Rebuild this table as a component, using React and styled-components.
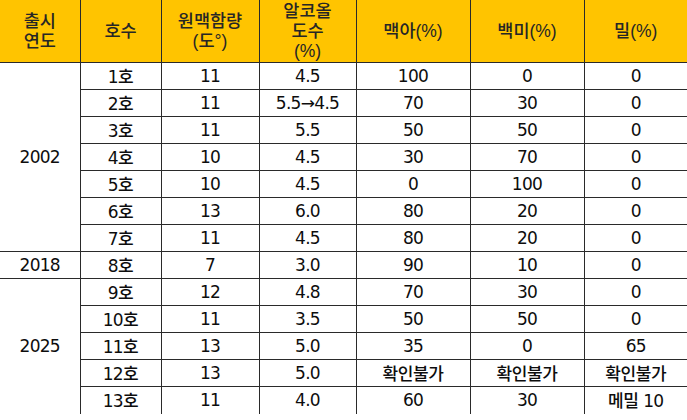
import React from 'react';
import styled, { createGlobalStyle } from 'styled-components';

const GlobalStyle = createGlobalStyle`
  html, body {
    margin: 0;
    padding: 0;
    background: #fff;
  }
  body {
    font-family: "DejaVu Sans", "Noto Sans CJK KR", sans-serif;
  }
`;

const Table = styled.table`
  width: 687px;
  border-collapse: collapse;
  table-layout: fixed;
  color: #0d0d0d;
  font-size: 17px;
  letter-spacing: -0.7px;
`;

const HeadCell = styled.th`
  height: 62px;
  padding: 0;
  background-color: #ffc400;
  border: 1px solid #2a2a2a;
  border-top: none;
  font-family: "Liberation Sans", "Noto Sans CJK KR", sans-serif;
  font-size: 17.5px;
  font-weight: 500;
  letter-spacing: 0;
  line-height: 20px;
  color: #262626;
  text-align: center;
  vertical-align: middle;

  &:first-child {
    border-left: none;
  }
  &:last-child {
    border-right: none;
  }
`;

const HeadLine = styled.span`
  display: block;
  height: 20px;
`;

const Row = styled.tr`
  height: 27px;

  &:last-child td {
    border-bottom: none;
  }
`;

const Cell = styled.td`
  padding: 0;
  border: 1px solid #2a2a2a;
  text-align: center;
  vertical-align: middle;
  line-height: 20px;
  white-space: nowrap;

  &:last-child {
    border-right: none;
  }
`;

const Hangul = styled.span`
  font-family: "Noto Sans CJK KR", sans-serif;
  font-weight: 500;
  letter-spacing: -0.4px;
`;

const YearCell = styled(Cell)`
  border-left: none;
  border-bottom: ${(props) => (props.$last ? 'none' : '1px solid #2a2a2a')};
`;

const widths = [80, 81, 98, 97, 114, 114, 103];

const headers = [
  ['출시', '연도'],
  ['호수'],
  ['원맥함량', '(도°)'],
  ['알코올', '도수', '(%)'],
  ['맥아(%)'],
  ['백미(%)'],
  ['밀(%)'],
];

const groups = [
  {
    year: '2002',
    rows: [
      ['1호', '11', '4.5', '100', '0', '0'],
      ['2호', '11', '5.5→4.5', '70', '30', '0'],
      ['3호', '11', '5.5', '50', '50', '0'],
      ['4호', '10', '4.5', '30', '70', '0'],
      ['5호', '10', '4.5', '0', '100', '0'],
      ['6호', '13', '6.0', '80', '20', '0'],
      ['7호', '11', '4.5', '80', '20', '0'],
    ],
  },
  {
    year: '2018',
    rows: [['8호', '7', '3.0', '90', '10', '0']],
  },
  {
    year: '2025',
    rows: [
      ['9호', '12', '4.8', '70', '30', '0'],
      ['10호', '11', '3.5', '50', '50', '0'],
      ['11호', '13', '5.0', '35', '0', '65'],
      ['12호', '13', '5.0', '확인불가', '확인불가', '확인불가'],
      ['13호', '11', '4.0', '60', '30', '메밀 10'],
    ],
  },
];

// wrap hangul runs so they get the CJK face at a medium weight
const CellText = ({ value }) =>
  value.split(/([가-힣]+)/).map((part, i) =>
    /[가-힣]/.test(part) ? <Hangul key={i}>{part}</Hangul> : part
  );

export default function App() {
  return (
    <>
      <GlobalStyle />
      <Table>
        <colgroup>
          {widths.map((w, i) => (
            <col key={i} style={{ width: w }} />
          ))}
        </colgroup>
        <thead>
          <tr>
            {headers.map((h, i) => (
              <HeadCell key={i}>
                {h.map((line, k) => (
                  <HeadLine key={k}>{line}</HeadLine>
                ))}
              </HeadCell>
            ))}
          </tr>
        </thead>
        <tbody>
          {groups.map((g, gi) =>
            g.rows.map((r, i) => (
              <Row key={g.year + i}>
                {i === 0 && (
                  <YearCell rowSpan={g.rows.length} $last={gi === groups.length - 1}>
                    {g.year}
                  </YearCell>
                )}
                {r.map((v, j) => (
                  <Cell key={j}>
                    <CellText value={v} />
                  </Cell>
                ))}
              </Row>
            ))
          )}
        </tbody>
      </Table>
    </>
  );
}
